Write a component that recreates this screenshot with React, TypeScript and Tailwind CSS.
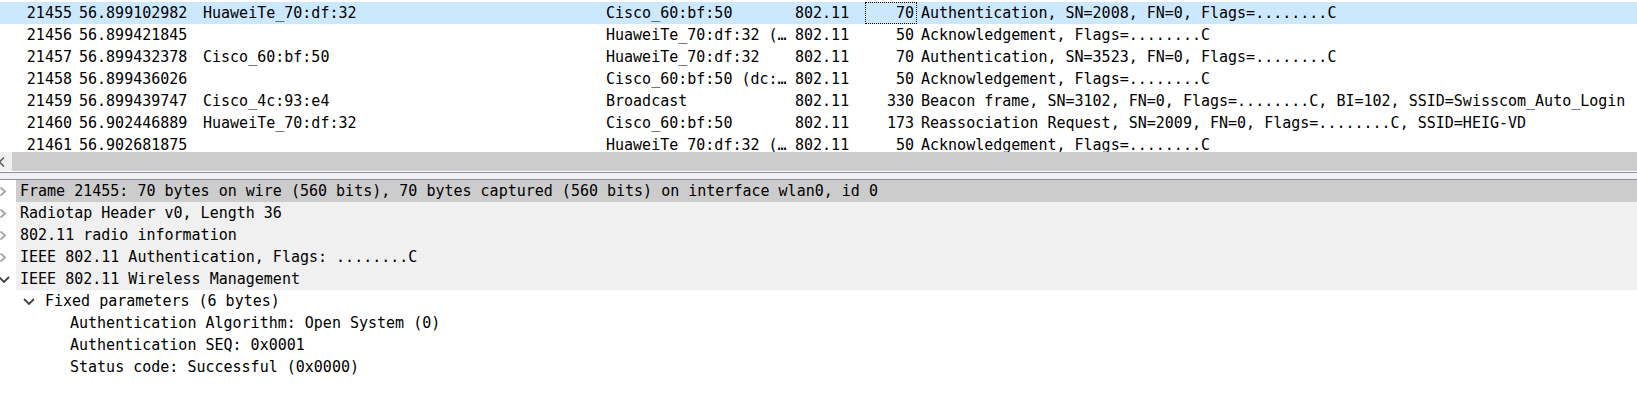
import React from 'react';

type Packet = {
  no: string;
  time: string;
  src: string;
  dst: string;
  proto: string;
  len: string;
  info: string;
};

const packets: Packet[] = [
  { no: '21455', time: '56.899102982', src: 'HuaweiTe_70:df:32', dst: 'Cisco_60:bf:50', proto: '802.11', len: '70', info: 'Authentication, SN=2008, FN=0, Flags=........C' },
  { no: '21456', time: '56.899421845', src: '', dst: 'HuaweiTe_70:df:32 (…', proto: '802.11', len: '50', info: 'Acknowledgement, Flags=........C' },
  { no: '21457', time: '56.899432378', src: 'Cisco_60:bf:50', dst: 'HuaweiTe_70:df:32', proto: '802.11', len: '70', info: 'Authentication, SN=3523, FN=0, Flags=........C' },
  { no: '21458', time: '56.899436026', src: '', dst: 'Cisco_60:bf:50 (dc:…', proto: '802.11', len: '50', info: 'Acknowledgement, Flags=........C' },
  { no: '21459', time: '56.899439747', src: 'Cisco_4c:93:e4', dst: 'Broadcast', proto: '802.11', len: '330', info: 'Beacon frame, SN=3102, FN=0, Flags=........C, BI=102, SSID=Swisscom_Auto_Login' },
  { no: '21460', time: '56.902446889', src: 'HuaweiTe_70:df:32', dst: 'Cisco_60:bf:50', proto: '802.11', len: '173', info: 'Reassociation Request, SN=2009, FN=0, Flags=........C, SSID=HEIG-VD' },
  { no: '21461', time: '56.902681875', src: '', dst: 'HuaweiTe_70:df:32 (…', proto: '802.11', len: '50', info: 'Acknowledgement, Flags=........C' },
];

type Node = {
  level: number;
  text: string;
  arrow: 'right' | 'down' | 'none';
  bg: string;
};

const tree: Node[] = [
  { level: 0, text: 'Frame 21455: 70 bytes on wire (560 bits), 70 bytes captured (560 bits) on interface wlan0, id 0', arrow: 'right', bg: 'bg-[#cccccc]' },
  { level: 0, text: 'Radiotap Header v0, Length 36', arrow: 'right', bg: 'bg-[#f0f0f0]' },
  { level: 0, text: '802.11 radio information', arrow: 'right', bg: 'bg-[#f0f0f0]' },
  { level: 0, text: 'IEEE 802.11 Authentication, Flags: ........C', arrow: 'right', bg: 'bg-[#f0f0f0]' },
  { level: 0, text: 'IEEE 802.11 Wireless Management', arrow: 'down', bg: 'bg-[#f0f0f0]' },
  { level: 1, text: 'Fixed parameters (6 bytes)', arrow: 'down', bg: '' },
  { level: 2, text: 'Authentication Algorithm: Open System (0)', arrow: 'none', bg: '' },
  { level: 2, text: 'Authentication SEQ: 0x0001', arrow: 'none', bg: '' },
  { level: 2, text: 'Status code: Successful (0x0000)', arrow: 'none', bg: '' },
];

const Arrow = ({ kind }: { kind: Node['arrow'] }) => {
  if (kind === 'none') return null;
  if (kind === 'right')
    return (
      <svg width="11" height="13" viewBox="0 0 11 13" className="-ml-[2px]">
        <path d="M2.5 2.5 L7 6.5 L2.5 10.5" fill="none" stroke="#a3a3a3" strokeWidth="1.8" />
      </svg>
    );
  return (
    <svg width="12" height="13" viewBox="0 0 12 13" className="-ml-[2px]">
      <path d="M1 4 L6 9 L11 4" fill="none" stroke="#404040" strokeWidth="1.8" />
    </svg>
  );
};

const PacketRow = ({ p, selected }: { p: Packet; selected: boolean }) => (
  <div className={`flex h-[22px] leading-[22px] whitespace-nowrap ${selected ? 'bg-[#cce8ff]' : ''}`}>
    <div className="w-[75px] shrink-0 text-right pr-[3px]">{p.no}</div>
    <div className="w-[124px] shrink-0 pl-[4px]">{p.time}</div>
    <div className="w-[403px] shrink-0 pl-[4px]">{p.src}</div>
    <div className="w-[189px] shrink-0 pl-[4px] overflow-hidden">{p.dst}</div>
    <div className="w-[74px] shrink-0 pl-[4px]">{p.proto}</div>
    <div
      className={`w-[52px] shrink-0 text-right pr-[2px] border leading-[20px] ${
        selected ? 'border-dotted border-black' : 'border-transparent'
      }`}
    >
      {p.len}
    </div>
    <div className="flex-1 pl-[4px]">{p.info}</div>
  </div>
);

const TreeRow = ({ n }: { n: Node }) => (
  <div className="flex h-[22px] leading-[22px] whitespace-nowrap">
    <div className="shrink-0" style={{ width: n.level * 25 }} />
    <div className="w-[16px] shrink-0 flex items-center">
      <Arrow kind={n.arrow} />
    </div>
    <div className={`flex-1 pl-[4px] ${n.bg}`}>{n.text}</div>
  </div>
);

export default function App() {
  return (
    <div className="w-[1637px] h-[420px] bg-white overflow-hidden text-black text-[15px] font-['DejaVu_Sans_Mono',monospace]">
      {/* packet list */}
      <div className="h-[152px] pt-[2px] overflow-hidden">
        {packets.map((p, i) => (
          <PacketRow key={p.no} p={p} selected={i === 0} />
        ))}
      </div>

      {/* horizontal scrollbar */}
      <div className="flex h-[19px]">
        <div className="w-[12px] bg-[#f0f0f0] flex items-center overflow-hidden">
          <svg width="10" height="12" viewBox="0 0 10 12" className="-ml-[3px]">
            <path d="M7 1.5 L2.5 6 L7 10.5" fill="none" stroke="#606060" strokeWidth="1.6" />
          </svg>
        </div>
        <div className="flex-1 bg-[#cdcdcd]" />
      </div>

      {/* splitter */}
      <div className="h-[9px] border-t border-white">
        <div className="h-[8px] bg-[#f0f0f0] border-t border-b border-[#8e8e9a]" />
      </div>

      {/* packet details */}
      <div>
        {tree.map((n, i) => (
          <TreeRow key={i} n={n} />
        ))}
      </div>
    </div>
  );
}
